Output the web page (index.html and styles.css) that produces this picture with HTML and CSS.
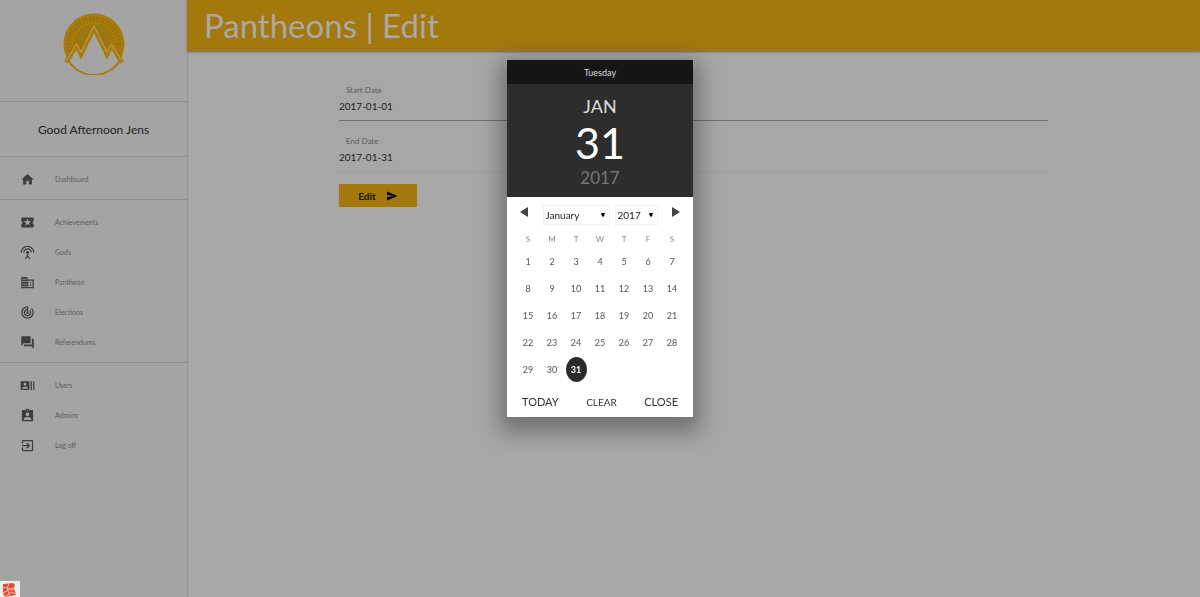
FILE: index.html
```
<!DOCTYPE html>
<html lang="en">
<head>
<meta charset="utf-8">
<title>Pantheons | Edit</title>
<link rel="stylesheet" href="styles.css">
</head>
<body>
<div class="app">
  <aside class="sidebar">
    <div class="brand">
      <svg class="logo" viewBox="0 0 62 62" aria-hidden="true">
        <circle cx="31" cy="31" r="30.500" fill="#a77c0b"/>
        <circle cx="31" cy="31" r="25" fill="none" stroke="#98700d" stroke-width="5" stroke-dasharray="2 1.500"/>
        <circle cx="31" cy="31" r="25" fill="none" stroke="#a77c0b" stroke-width="1"/>
        <circle cx="31" cy="31" r="20" fill="#9b7710"/>
        <path d="M3 49 13.500 31 18 39.500 31 14 44 39.500 48.500 31 59 49A33 33 0 0 1 3 49Z" fill="#a4a4a4"/>
        <path d="M5 47A30 30 0 0 0 57 47" fill="none" stroke="#a77c0b" stroke-width="2"/>
        <path d="M3 49.500 13.500 32 18 41.500 31 15 44 41.500 48.500 32 59 49.500" fill="none" stroke="#a77c0b" stroke-width="4.500"/>
        <path d="M3 48.500 13.500 31 18 39.500 31 13 44 39.500 48.500 31 59 48.500" fill="none" stroke="#b5a069" stroke-width="1"/>
      </svg>
    </div>
    <p class="greeting">Good Afternoon Jens</p>
    <nav>
      <div class="group">
        <a class="item" href="#"><svg class="icon" viewBox="0 0 24 24"><path d="M10 20v-6h4v6h5v-8h3L12 3 2 12h3v8z"/></svg>Dashboard</a>
      </div>
      <div class="group">
        <a class="item" href="#"><svg class="icon" viewBox="0 0 24 24"><path d="M20 12c0-1.100.9-2 2-2V6c0-1.100-.9-2-2-2H4c-1.100 0-1.990.9-1.990 2v4c1.100 0 1.990.9 1.990 2s-.89 2-2 2v4c0 1.100.9 2 2 2h16c1.100 0 2-.9 2-2v-4c-1.100 0-2-.9-2-2zm-4.420 4.800L12 14.500l-3.580 2.300 1.080-4.120-3.290-2.690 4.240-.25L12 5.800l1.540 3.950 4.240.25-3.290 2.690 1.090 4.110z"/></svg>Achievements</a>
        <a class="item" href="#"><svg class="icon" viewBox="0 0 24 24"><path d="M12 5c-3.870 0-7 3.130-7 7h2c0-2.760 2.240-5 5-5s5 2.240 5 5h2c0-3.870-3.130-7-7-7zm1 9.290c.88-.39 1.500-1.260 1.500-2.290 0-1.380-1.120-2.500-2.500-2.500S9.500 10.620 9.500 12c0 1.020.62 1.900 1.500 2.290v3.300L7.590 21 9 22.410l3-3 3 3L16.410 21 13 17.590v-3.300zM12 1C5.930 1 1 5.930 1 12h2c0-4.970 4.030-9 9-9s9 4.030 9 9h2c0-6.070-4.930-11-11-11z"/></svg>Gods</a>
        <a class="item" href="#"><svg class="icon" viewBox="0 0 24 24"><path d="M12 7V3H2v18h20V7H12zM11 19H3v-1h8v1zm0-4H3v-1h8v1zm0-4H3v-1h8v1zm0-4H3V6h8v1zm9 12h-8v-2h2v-2h-2v-2h2v-2h-2V9h8v10zm-2-8h-2v2h2v-2zm0 4h-2v2h2v-2z" fill-rule="evenodd"/></svg>Pantheon</a>
        <a class="item" href="#"><svg class="icon" viewBox="0 0 24 24"><path d="M19.070 4.930l-1.410 1.410C19.100 7.790 20 9.790 20 12c0 4.420-3.580 8-8 8s-8-3.580-8-8c0-4.080 3.050-7.440 7-7.930v2.020C8.160 6.570 6 9.030 6 12c0 3.310 2.690 6 6 6s6-2.690 6-6c0-1.660-.67-3.160-1.760-4.240l-1.410 1.410C15.550 9.900 16 10.900 16 12c0 2.210-1.790 4-4 4s-4-1.790-4-4c0-1.860 1.280-3.410 3-3.860v2.140c-.6.35-1 .98-1 1.720 0 1.100.9 2 2 2s2-.9 2-2c0-.74-.4-1.380-1-1.720V2h-1C6.480 2 2 6.480 2 12s4.480 10 10 10 10-4.480 10-10c0-2.760-1.120-5.260-2.930-7.070z"/></svg>Elections</a>
        <a class="item" href="#"><svg class="icon" viewBox="0 0 24 24"><path d="M21 6h-2v9H6v2c0 .55.45 1 1 1h11l4 4V7c0-.55-.45-1-1-1zm-4 6V3c0-.55-.45-1-1-1H3c-.55 0-1 .45-1 1v14l4-4h10c.55 0 1-.45 1-1z"/></svg>Referendums</a>
      </div>
      <div class="group">
        <a class="item" href="#"><svg class="icon" viewBox="0 0 24 24"><path d="M21 5v14h2V5h-2zm-4 14h2V5h-2v14zM14 5H2c-.55 0-1 .45-1 1v12c0 .55.45 1 1 1h12c.55 0 1-.45 1-1V6c0-.55-.45-1-1-1zM8 7.750c1.240 0 2.250 1.010 2.250 2.250S9.240 12.250 8 12.250 5.750 11.240 5.750 10 6.760 7.750 8 7.750zM12.500 17h-9v-.75c0-1.500 3-2.250 4.500-2.250s4.500.75 4.500 2.250V17z"/></svg>Users</a>
        <a class="item" href="#"><svg class="icon" viewBox="0 0 24 24"><path d="M19 3h-4.180C14.400 1.840 13.300 1 12 1c-1.300 0-2.400.84-2.820 2H5c-1.100 0-2 .9-2 2v14c0 1.100.9 2 2 2h14c1.100 0 2-.9 2-2V5c0-1.100-.9-2-2-2zm-7 0c.55 0 1 .45 1 1s-.45 1-1 1-1-.45-1-1 .45-1 1-1zm0 4c1.660 0 3 1.340 3 3s-1.340 3-3 3-3-1.340-3-3 1.340-3 3-3zm6 12H6v-1.400c0-2 4-3.100 6-3.100s6 1.100 6 3.100V19z"/></svg>Admins</a>
        <a class="item" href="#"><svg class="icon" viewBox="0 0 24 24"><path d="M10.090 15.590L11.500 17l5-5-5-5-1.410 1.410L12.670 11H3v2h9.670l-2.580 2.590zM19 3H5c-1.110 0-2 .9-2 2v4h2V5h14v14H5v-4H3v4c0 1.100.89 2 2 2h14c1.100 0 2-.9 2-2V5c0-1.100-.9-2-2-2z"/></svg>Log off</a>
      </div>
    </nav>
  </aside>
  <main class="main">
    <header class="topbar"><h1>Pantheons | Edit</h1></header>
    <form class="form">
      <div class="field active">
        <label for="start">Start Date</label>
        <input id="start" type="text" value="2017-01-01">
      </div>
      <div class="field">
        <label for="end">End Date</label>
        <input id="end" type="text" value="2017-01-31">
      </div>
      <button class="submit" type="button">Edit
        <svg class="send" viewBox="0 0 24 24"><path d="M2.010 21L23 12 2.010 3 2 10l15 2-15 2z"/></svg>
      </button>
    </form>
  </main>
</div>

<div class="debug-tab">
  <svg viewBox="0 0 14 14" aria-hidden="true">
    <path d="M1 1 11 0 13 2 12 5 14 12 3 14 1 10Z" fill="#e9492f"/>
    <path d="M1 4 12 7M7 0 5 6 8 13M1 10 13 4M3 14 9 9 14 11" fill="none" stroke="#f7c2b8" stroke-width="0.900"/>
  </svg>
</div>

<div class="overlay">
  <section class="picker" role="dialog" aria-label="Choose date">
    <div class="weekday">Tuesday</div>
    <div class="chosen">
      <div class="month">JAN</div>
      <div class="day">31</div>
      <div class="year">2017</div>
    </div>
    <div class="controls">
      <button type="button" class="arrow" aria-label="Previous month"><svg viewBox="0 0 8 10"><path d="M8 0V10L0 5Z"/></svg></button>
      <div class="selects">
        <div class="select wide">
          <select aria-label="Month"><option>January</option></select>
          <svg viewBox="0 0 4 4"><path d="M0 0H4L3 3 2 4 1 3Z"/></svg>
        </div>
        <div class="select">
          <select aria-label="Year"><option>2017</option></select>
          <svg viewBox="0 0 4 4"><path d="M0 0H4L3 3 2 4 1 3Z"/></svg>
        </div>
      </div>
      <button type="button" class="arrow" aria-label="Next month"><svg viewBox="0 0 8 10"><path d="M0 0V10L8 5Z"/></svg></button>
    </div>
    <table class="calendar">
      <thead><tr><th>S</th><th>M</th><th>T</th><th>W</th><th>T</th><th>F</th><th>S</th></tr></thead>
      <tbody>
        <tr><td>1</td><td>2</td><td>3</td><td>4</td><td>5</td><td>6</td><td>7</td></tr>
        <tr><td>8</td><td>9</td><td>10</td><td>11</td><td>12</td><td>13</td><td>14</td></tr>
        <tr><td>15</td><td>16</td><td>17</td><td>18</td><td>19</td><td>20</td><td>21</td></tr>
        <tr><td>22</td><td>23</td><td>24</td><td>25</td><td>26</td><td>27</td><td>28</td></tr>
        <tr><td>29</td><td>30</td><td><span class="selected">31</span></td><td></td><td></td><td></td><td></td></tr>
      </tbody>
    </table>
    <div class="actions">
      <button type="button">TODAY</button>
      <button type="button" class="clear">CLEAR</button>
      <button type="button">CLOSE</button>
    </div>
  </section>
</div>
</body>
</html>
```
FILE: styles.css
```
* {
  box-sizing: border-box;
}

body {
  margin: 0;
  background: #a7a7a7;
  font-family: Lato, "Liberation Sans", sans-serif;
  color: #222;
}

button,
input,
select {
  margin: 0;
  padding: 0;
  border: 0;
  background: none;
  color: inherit;
  font-family: inherit;
}

.app {
  display: flex;
  min-height: 100vh;
}

/* Sidebar */
.sidebar {
  flex: 0 0 187px;
  background: #a4a4a4;
  box-shadow: 1px 0 1px #959595;
}

.brand {
  display: flex;
  justify-content: center;
  padding: 13px 0 26px;
  border-bottom: 1px solid #8c8c8c;
}

.logo {
  width: 62px;
  height: 62px;
}

.greeting {
  margin: 0;
  padding-top: 1px;
  font-size: 12px;
  line-height: 53px;
  text-align: center;
  border-bottom: 1px solid #8c8c8c;
}

.group {
  padding: 7px 0 5px;
  border-bottom: 1px solid #8c8c8c;
}

.group:last-child {
  border-bottom: 0;
}

.item {
  display: flex;
  align-items: center;
  gap: 20px;
  height: 30px;
  padding-left: 20px;
  font-size: 7px;
  color: #5c5c5c;
  text-decoration: none;
}

.icon {
  width: 15px;
  height: 15px;
  fill: #3d3d3d;
}

/* Content */
.main {
  flex: 1;
}

.topbar {
  padding: 0 17px;
  background: #a3780d;
  box-shadow: 0 1px 2px #666;
}

h1 {
  margin: 0;
  font-size: 33px;
  font-weight: 400;
  line-height: 51px;
  color: #a9a9a9;
}

.form {
  padding: 31px 15% 0;
}

.field {
  display: flex;
  flex-direction: column;
  height: 39px;
  margin-bottom: 12px;
  border-bottom: 1px solid #9aa0a5;
}

.active {
  border-bottom-color: #707070;
}

.field label {
  padding-left: 7px;
  font-size: 8px;
  line-height: 16px;
  color: #5c5c5c;
}

.field input {
  height: 16px;
  font-size: 10px;
}

.submit {
  display: flex;
  align-items: center;
  justify-content: center;
  gap: 10px;
  width: 78px;
  height: 23px;
  background: #a3780d;
  font-size: 10px;
  font-weight: 700;
  color: #17130a;
}

.send {
  width: 12px;
  height: 12px;
}

.debug-tab {
  position: fixed;
  left: 0;
  bottom: 0;
  display: flex;
  padding: 2px 4px 0 2px;
  background: #eee;
}

.debug-tab svg {
  width: 14px;
  height: 14px;
}

/* Date picker */
.overlay {
  position: fixed;
  inset: 0;
  display: flex;
  align-items: flex-start;
  justify-content: center;
  padding-top: 60px;
}

.picker {
  width: 186px;
  background: #fff;
  box-shadow: 0 8px 20px 7px rgba(0, 0, 0, 0.32);
}

.weekday {
  padding-top: 1px;
  background: #151515;
  color: #ddd;
  font-size: 9px;
  line-height: 23px;
  text-align: center;
}

.chosen {
  padding: 10px 0 8px;
  background: #2d2d2d;
  text-align: center;
}

.month {
  color: #ddd;
  font-size: 18px;
  line-height: 24px;
}

.day {
  color: #fff;
  font-size: 43px;
  line-height: 49px;
}

.year {
  color: #777;
  font-size: 17px;
  line-height: 22px;
}

.controls {
  display: flex;
  justify-content: space-between;
  padding: 8px 13px 0;
}

.arrow {
  display: flex;
  width: 8px;
  padding-top: 2px;
}

.arrow svg {
  width: 8px;
  height: 10px;
  fill: #444;
}

.selects {
  display: flex;
  gap: 5px;
}

.select {
  display: grid;
  align-items: center;
  width: 43px;
  height: 20px;
  border: 1px solid #f2f2f2;
}

.select.wide {
  width: 67px;
}

.select select {
  grid-area: 1 / 1;
  width: 100%;
  padding-left: 2px;
  appearance: none;
  font-size: 10px;
}

.select svg {
  grid-area: 1 / 1;
  justify-self: end;
  width: 4px;
  height: 4px;
  margin-right: 4px;
  pointer-events: none;
}

.calendar {
  width: 168px;
  margin: 4px auto 0;
  border-collapse: collapse;
  table-layout: fixed;
  text-align: center;
}

.calendar th {
  height: 19px;
  padding: 0;
  font-size: 8px;
  font-weight: 400;
  color: #888;
}

.calendar td {
  height: 27px;
  padding: 0;
  font-size: 9px;
  color: #555;
}

.selected {
  display: block;
  width: 21px;
  margin: 0 auto;
  border-radius: 50%;
  background: #2b2b2b;
  color: #fff;
  font-weight: 700;
  line-height: 25px;
}

.actions {
  display: flex;
  align-items: center;
  justify-content: space-between;
  height: 34px;
  padding: 3px 15px 0;
}

.actions button {
  font-size: 11px;
  color: #333;
}

.actions .clear {
  font-size: 10px;
}
```
